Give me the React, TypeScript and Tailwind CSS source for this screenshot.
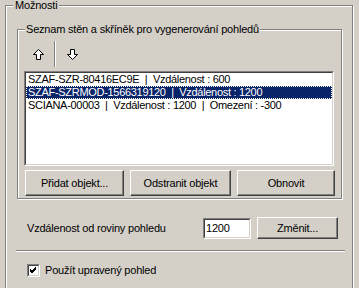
const font = { fontFamily: '"Liberation Sans", Arial, sans-serif' };

function Arrow({ down = false }: { down?: boolean }) {
  return (
    <svg width="11" height="11" viewBox="0 0 11 11" className={down ? "rotate-180" : ""}>
      <polygon
        points="5.5,0.5 10.5,5.5 7.5,5.5 7.5,10.5 3.5,10.5 3.5,5.5 0.5,5.5"
        fill="#fff"
        stroke="#000"
        strokeWidth="1"
      />
    </svg>
  );
}

function Button({ label, w, h }: { label: string; w: number; h: number }) {
  return (
    <div
      className="flex items-center justify-center bg-[#d4d0c8] text-black border border-t-white border-l-white border-r-[#404040] border-b-[#404040] shadow-[inset_-1px_-1px_0_#808080]"
      style={{ width: w, height: h }}
    >
      {label}
    </div>
  );
}

export default function App() {
  const rows = [
    "SZAF-SZR-80416EC9E  |  Vzdálenost : 600",
    "SZAF-SZRMOD-1566319120  |  Vzdálenost : 1200",
    "SCIANA-00003  |  Vzdálenost : 1200  |  Omezení : -300",
  ];

  return (
    <div className="w-[359px] h-[288px] overflow-hidden bg-[#d4d0c8] text-[11px] text-black leading-none tracking-[-0.2px]" style={font}>
      {/* Možnosti group */}
      <div className="relative ml-[5px] mt-[5px] w-[348px] h-[300px] border border-[#808080] shadow-[inset_1px_1px_0_#fff,1px_1px_0_#fff]">
        <span className="absolute left-[7px] top-[-7px] bg-[#d4d0c8] px-[2px] leading-[13px]">Možnosti</span>

        {/* Seznam group */}
        <div className="relative ml-[11px] mt-[23px] w-[325px] h-[170px] border border-[#808080] shadow-[inset_1px_1px_0_#fff,1px_1px_0_#fff]">
          <span className="absolute left-[7px] top-[-7px] bg-[#d4d0c8] px-[1px] leading-[13px]">
            Seznam stěn a skříněk pro vygenerování pohledů
          </span>

          {/* toolbar */}
          <div className="flex items-start h-[41px] pl-[15px]">
            <div className="mt-[19px]">
              <Arrow />
            </div>
            <div className="ml-[10px] mt-[11px] h-[26px] w-[2px] border-l border-[#808080] border-r border-r-white" />
            <div className="ml-[11px] mt-[19px]">
              <Arrow down />
            </div>
          </div>

          {/* list */}
          <div className="ml-[6px] w-[310px] h-[95px] bg-white border border-t-[#808080] border-l-[#808080] border-r-white border-b-white">
            <div className="h-full border border-t-[#404040] border-l-[#404040] border-r-[#d4d0c8] border-b-[#d4d0c8] tracking-[-0.3px]">
              {rows.map((r, i) => (
                <div
                  key={r}
                  className={`h-[13px] flex items-center pl-[2px] whitespace-pre ${
                    i === 1 ? "bg-[#0a246a] text-white outline outline-1 outline-dotted outline-[#fff] -outline-offset-1" : ""
                  }`}
                >
                  {r}
                </div>
              ))}
            </div>
          </div>

          {/* buttons */}
          <div className="flex gap-[6px] ml-[7px] mt-[4px]">
            <Button label="Přidat objekt..." w={99} h={26} />
            <Button label="Odstranit objekt" w={101} h={26} />
            <Button label="Obnovit" w={98} h={26} />
          </div>
        </div>

        {/* distance row */}
        <div className="flex items-center mt-[18px] h-[22px]">
          <span className="ml-[21px] w-[176px]">Vzdálenost od roviny pohledu</span>
          <div className="w-[48px] h-[21px] bg-white border border-t-[#808080] border-l-[#808080] border-r-white border-b-white">
            <div className="h-full border border-t-[#404040] border-l-[#404040] border-r-[#d4d0c8] border-b-[#d4d0c8] flex items-center pl-[1px]">
              1200
            </div>
          </div>
          <div className="ml-[6px]">
            <Button label="Změnit..." w={81} h={22} />
          </div>
        </div>

        {/* separator */}
        <div className="ml-[10px] mt-[11px] w-[329px] h-[2px] border-t border-[#808080] border-b border-b-white" />

        {/* checkbox */}
        <div className="flex items-center mt-[12px] ml-[21px] h-[13px]">
          <div className="w-[13px] h-[13px] bg-white border border-t-[#808080] border-l-[#808080] border-r-white border-b-white">
            <div className="w-full h-full border border-t-[#404040] border-l-[#404040] border-r-[#d4d0c8] border-b-[#d4d0c8] flex items-center justify-center">
              <svg width="7" height="7" viewBox="0 0 7 7">
                <path d="M0 2 L2 4 L6 0 M0 3 L2 5 L6 1 M0 4 L2 6 L6 2" stroke="#000" strokeWidth="1" fill="none" />
              </svg>
            </div>
          </div>
          <span className="ml-[5px]">Použít upravený pohled</span>
        </div>
      </div>
    </div>
  );
}
